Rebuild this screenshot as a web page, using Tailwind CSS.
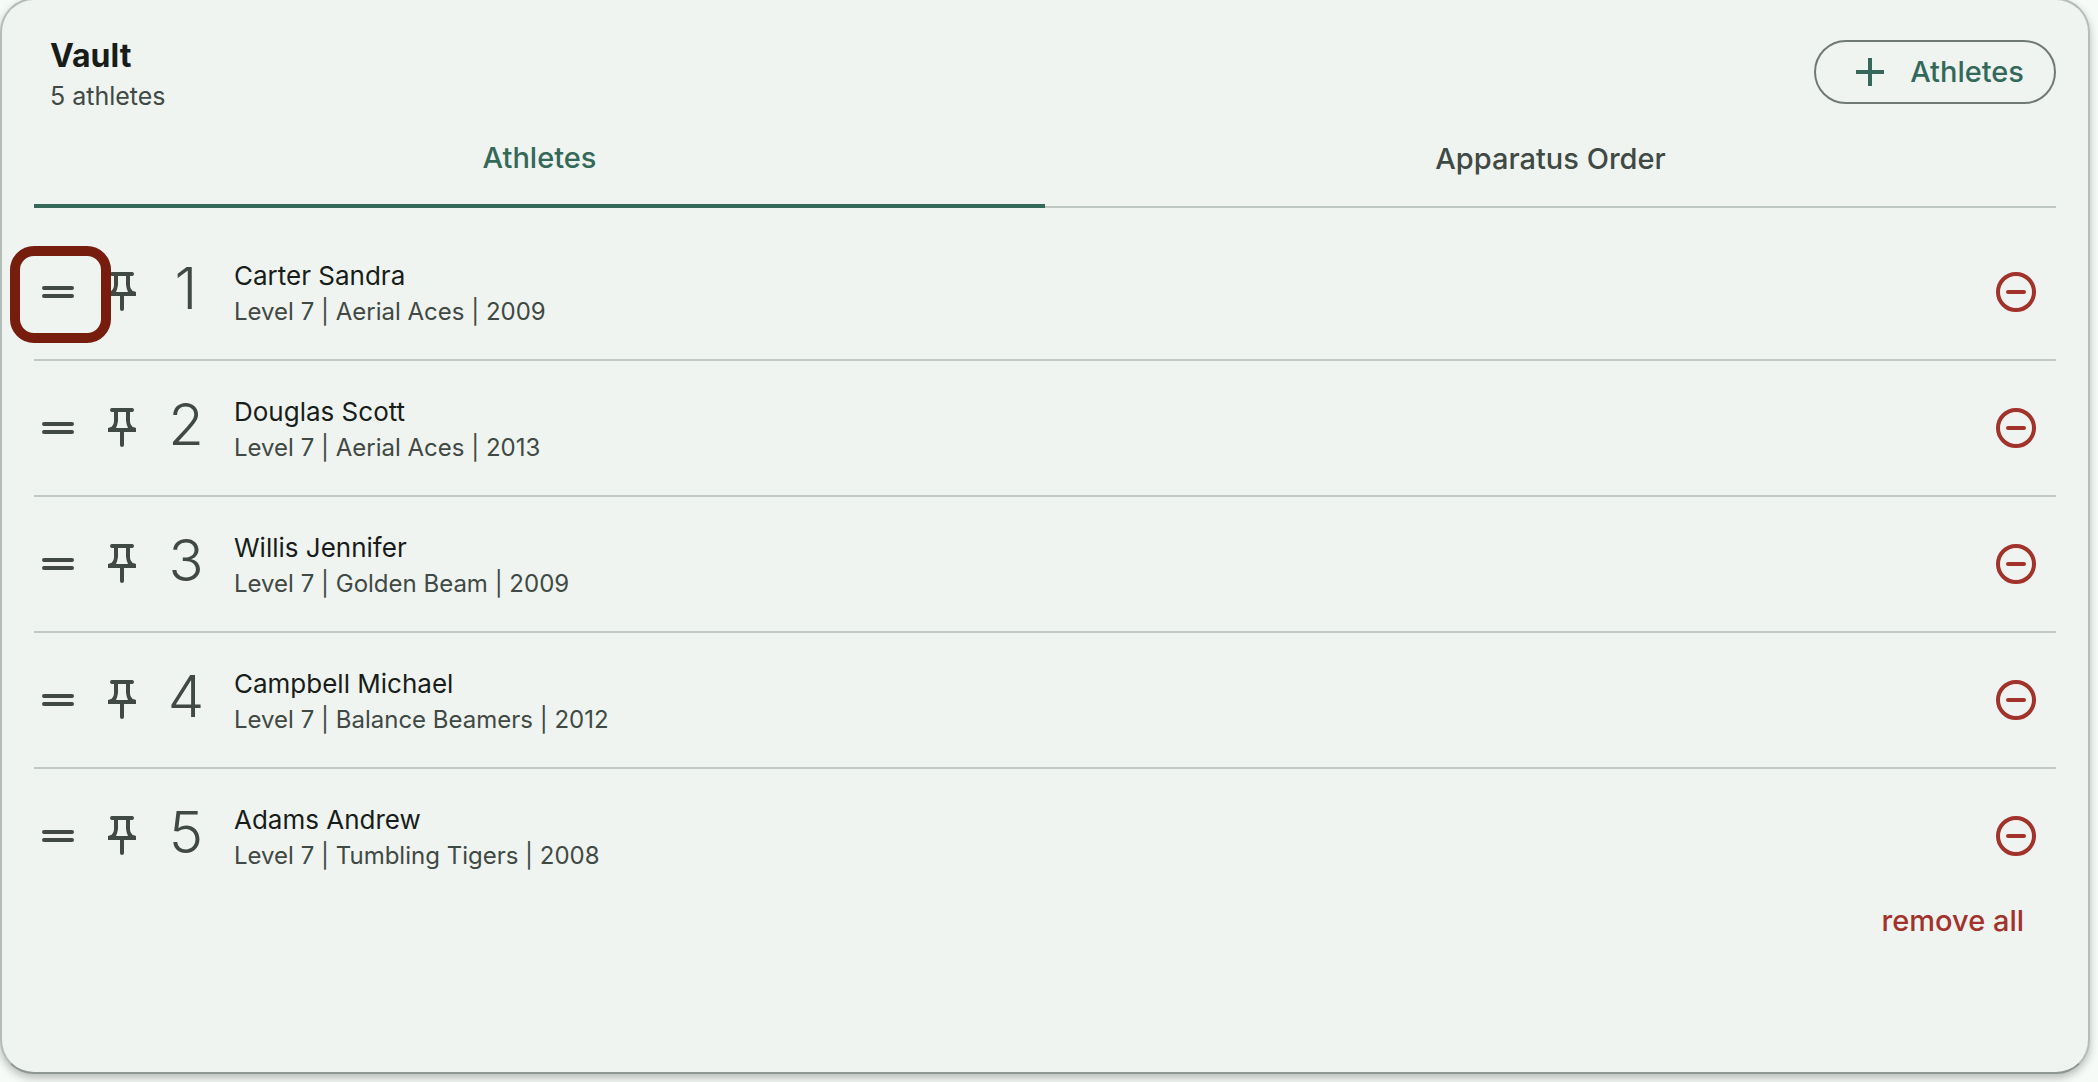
<!DOCTYPE html>
<html lang="en">
<head>
    <meta charset="UTF-8">
    <meta name="viewport" content="width=device-width, initial-scale=1.0">
    <title>Vault</title>
    <script src="https://cdn.jsdelivr.net/npm/@tailwindcss/browser@4"></script>
</head>
<body class="min-h-screen bg-[#f6fbf7] pr-2 pb-2 font-[Inter,sans-serif] text-[#181d1a] overflow-hidden">
    <!-- icons -->
    <svg class="hidden">
        <symbol id="handle" viewBox="0 0 48 48">
            <path d="M10 20h28M10 28h28" fill="none" stroke="currentColor" stroke-width="4" stroke-linecap="round" />
        </symbol>
        <symbol id="pin" viewBox="0 0 48 48">
            <path d="M14 6h20M24 26v15" fill="none" stroke="currentColor" stroke-width="4" stroke-linecap="round" />
            <path d="M18 6v11q0 5-4 8M30 6v11q0 5 4 8" fill="none" stroke="currentColor" stroke-width="4" />
            <path d="M10 28v-4l3-1h22l3 1v4z" fill="currentColor" />
            <path d="M20 8h8v9q0 4 2 7H18q2-3 2-7z" fill="#eff4f0" />
        </symbol>
        <symbol id="minus-circle" viewBox="0 0 48 48">
            <circle cx="24" cy="24" r="18" fill="none" stroke="currentColor" stroke-width="4" />
            <path d="M16 24h16" stroke="currentColor" stroke-width="4" stroke-linecap="round" />
        </symbol>
    </svg>

    <main class="-mt-0.5 min-h-[calc(100vh-6px)] rounded-[34px] border-2 border-[#b5bdb8] border-b-[#8f9792] bg-[#eff4f0] px-8 pt-10 shadow-[0_4px_8px_rgb(0_0_0/0.25)]">
        <header class="flex h-18 items-start justify-between pl-4">
            <div>
                <h1 class="text-[32px] leading-8 font-bold">Vault</h1>
                <p class="mt-2 text-[25px] leading-8 text-[#404944]">5 athletes</p>
            </div>
            <button class="flex h-16 items-center gap-4 rounded-full border-2 border-[#707974] px-[30px] text-[29px] font-medium text-[#34695a]">
                <svg class="size-12" viewBox="0 0 48 48"><path d="M24 10v28M10 24h28" stroke="currentColor" stroke-width="4" /></svg>
                Athletes
            </button>
        </header>

        <nav class="flex h-24 border-b-2 border-[#bfc9c2] text-[29px] font-medium">
            <button class="-mb-0.5 flex-1 border-b-4 border-[#34695a] text-[#34695a]">Athletes</button>
            <button class="flex-1 text-[#404944]">Apparatus Order</button>
        </nav>

        <ul id="athletes" class="mt-[17px]"></ul>

        <div class="flex justify-end pr-8">
            <button class="-mt-1 text-[29px] leading-10 font-medium text-[#a1322c]">remove all</button>
        </div>
    </main>

    <script>
        const athletes = [
            { name: "Carter Sandra", club: "Aerial Aces", year: 2009 },
            { name: "Douglas Scott", club: "Aerial Aces", year: 2013 },
            { name: "Willis Jennifer", club: "Golden Beam", year: 2009 },
            { name: "Campbell Michael", club: "Balance Beamers", year: 2012 },
            { name: "Adams Andrew", club: "Tumbling Tigers", year: 2008 },
        ];

        document.getElementById("athletes").innerHTML = athletes.map((a, i) => `
            <li class="relative flex h-34 items-center border-b-2 border-[#bfc9c2] pr-4 text-[#404944] last:border-transparent">
                <button aria-label="Move ${a.name}"><svg class="size-12"><use href="#handle" /></svg></button>
                <button class="ml-4" aria-label="Pin ${a.name}"><svg class="size-12"><use href="#pin" /></svg></button>
                <span class="ml-4 w-12 pb-2 text-center text-[58px] leading-none font-light">${i + 1}</span>
                <div class="ml-6 grow pt-1">
                    <p class="text-[26px] leading-9 text-[#181d1a]">${a.name}</p>
                    <p class="text-2xl leading-9">Level 7 | ${a.club} | ${a.year}</p>
                </div>
                <button class="text-[#a1322c]" aria-label="Remove ${a.name}"><svg class="size-12"><use href="#minus-circle" /></svg></button>
                ${i === 0 ? '<div class="pointer-events-none absolute top-[21px] -left-6 h-[97px] w-[101px] rounded-3xl border-10 border-[#771d0e]"></div>' : ""}
            </li>`).join("");
    </script>
</body>
</html>
